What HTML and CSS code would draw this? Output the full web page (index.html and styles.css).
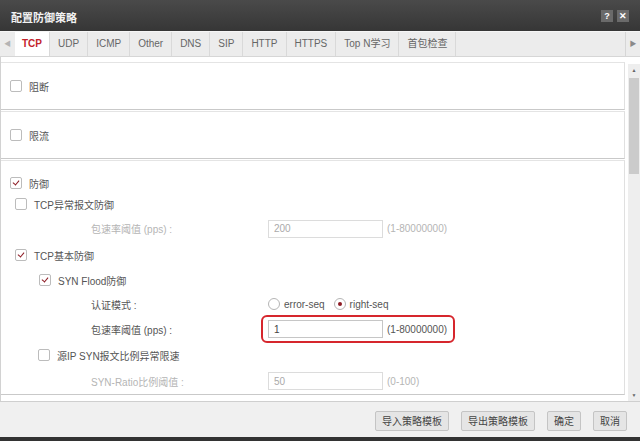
FILE: index.html
```html
<!DOCTYPE html>
<html lang="zh-CN">
<head>
    <meta charset="UTF-8">
    <title>配置防御策略</title>
    <link rel="stylesheet" href="styles.css">
</head>
<body>
<div class="dialog">
    <div class="titlebar">
        <span class="title">配置防御策略</span>
        <div class="title-btns">
            <span class="tbtn">?</span>
            <span class="tbtn">&#x2715;</span>
        </div>
    </div>

    <div class="tabbar">
        <span class="tab-arrow">&#9664;</span>
        <div class="tabs">
            <span class="tab active">TCP</span>
            <span class="tab">UDP</span>
            <span class="tab">ICMP</span>
            <span class="tab">Other</span>
            <span class="tab">DNS</span>
            <span class="tab">SIP</span>
            <span class="tab">HTTP</span>
            <span class="tab">HTTPS</span>
            <span class="tab">Top N学习</span>
            <span class="tab">首包检查</span>
        </div>
        <span class="tab-arrow right">&#9654;</span>
    </div>

    <div class="body">
        <div class="panels">
            <div class="section small">
                <label class="check"><span class="box"></span>阻断</label>
            </div>
            <div class="section small">
                <label class="check"><span class="box"></span>限流</label>
            </div>
            <div class="section big">
                <div class="row h20">
                    <label class="check"><span class="box on"></span>防御</label>
                </div>
                <div class="row h22 lv1">
                    <label class="check"><span class="box"></span>TCP异常报文防御</label>
                </div>
                <div class="row h27">
                    <span class="field-label off">包速率阈值 (pps) :</span>
                    <input class="txt off" type="text" value="200" disabled>
                    <span class="range off">(1-80000000)</span>
                </div>
                <div class="row h26 lv1">
                    <label class="check"><span class="box on"></span>TCP基本防御</label>
                </div>
                <div class="row h24 lv2">
                    <label class="check"><span class="box on"></span>SYN Flood防御</label>
                </div>
                <div class="row h24">
                    <span class="field-label">认证模式 :</span>
                    <label class="radio"><span class="dot"></span>error-seq</label>
                    <label class="radio"><span class="dot on"></span>right-seq</label>
                </div>
                <div class="row h26">
                    <span class="field-label">包速率阈值 (pps) :</span>
                    <div class="mark">
                        <input class="txt" type="text" value="1">
                        <span class="range">(1-80000000)</span>
                    </div>
                </div>
                <div class="row h26 lv2b">
                    <label class="check"><span class="box"></span>源IP SYN报文比例异常限速</label>
                </div>
                <div class="row h26">
                    <span class="field-label off">SYN-Ratio比例阈值 :</span>
                    <input class="txt off" type="text" value="50" disabled>
                    <span class="range off">(0-100)</span>
                </div>
            </div>
        </div>
        <div class="scrollbar">
            <span class="sarrow">&#9650;</span>
            <span class="thumb"></span>
            <span class="sarrow down">&#9660;</span>
        </div>
    </div>

    <div class="footer">
        <button class="btn">导入策略模板</button>
        <button class="btn">导出策略模板</button>
        <button class="btn">确定</button>
        <button class="btn">取消</button>
    </div>
    <div class="bottom"></div>
</div>
</body>
</html>
```

FILE: styles.css
```css
body {
    margin: 0;
    font-family: "Liberation Sans", "Noto Sans CJK SC", sans-serif;
    font-size: 10px;
    color: #444;
    background: #fff;
}
.dialog {
    width: 640px;
    height: 441px;
    display: flex;
    flex-direction: column;
    overflow: hidden;
}

/* 标题栏 */
.titlebar {
    height: 31px;
    flex: none;
    background: linear-gradient(#4a4a4a, #363636);
    display: flex;
    align-items: center;
    justify-content: space-between;
    padding: 0 11px;
}
.title {
    color: #f2f2f2;
    font-size: 11px;
    font-weight: bold;
    margin-top: 2px;
}
.title-btns {
    display: flex;
    gap: 4px;
}
.tbtn {
    width: 12px;
    height: 12px;
    background: #6a6a6a;
    color: #fff;
    font-size: 9px;
    font-weight: bold;
    line-height: 12px;
    text-align: center;
}

/* 标签栏 */
.tabbar {
    height: 26px;
    flex: none;
    background: #ececec;
    border-top: 1px solid #f6f6f6;
    border-bottom: 1px solid #d6d6d6;
    box-sizing: border-box;
    display: flex;
    position: relative;
}
.tab-arrow {
    width: 15px;
    color: #b4b4b4;
    font-size: 7px;
    line-height: 24px;
    text-align: center;
}
.tab-arrow.right {
    margin-left: auto;
    width: 14px;
    color: #8a8a8a;
    border-left: 1px solid #d6d6d6;
}
.tabs {
    display: flex;
}
.tab {
    padding: 0 8px;
    line-height: 24px;
    font-size: 10px;
    color: #666;
    border-right: 1px solid #d9d9d9;
}
.tab.active {
    background: #fff;
    color: #c3232b;
    font-weight: bold;
    padding: 0 7px 0 7px;
    position: relative;
}
.tab.active::after {
    content: "";
    position: absolute;
    left: 12px;
    bottom: -5px;
    border-left: 4px solid transparent;
    border-right: 4px solid transparent;
    border-top: 4px solid #fff;
}

/* 内容区 */
.body {
    flex: 1;
    display: flex;
    min-height: 0;
    border-bottom: 1px solid #cfcfcf;
}
.panels {
    flex: 1;
    padding-top: 5px;
    overflow: hidden;
    border-left: 1px solid #d2d2d2;
    margin-right: 3px;
}
.section {
    border-top: 1px solid #e4e4e4;
    border-bottom: 1px solid #c9c9c9;
    border-right: 1px solid #e0e0e0;
    margin-bottom: 1px;
    box-sizing: border-box;
}
.section.small {
    height: 48px;
    display: flex;
    align-items: center;
    padding-left: 9px;
}
.section.big {
    padding: 12px 0 0 9px;
}
.row {
    display: flex;
    align-items: center;
}
.h20 { height: 20px; }
.h22 { height: 22px; }
.h24 { height: 24px; }
.h26 { height: 26px; }
.h27 { height: 27px; }
.lv1 { padding-left: 5px; }
.lv2 { padding-left: 29px; }
.lv2b { padding-left: 28px; }

.check {
    display: flex;
    align-items: center;
    color: #555;
}
.box {
    width: 10px;
    height: 10px;
    border: 1px solid #bcbcbc;
    border-radius: 2px;
    background: #fff;
    margin-right: 7px;
    position: relative;
}
.box.on::after {
    content: "";
    position: absolute;
    left: 3px;
    top: 1px;
    width: 3px;
    height: 5px;
    border-right: 1.5px solid #8d1b24;
    border-bottom: 1.5px solid #8d1b24;
    transform: rotate(40deg);
}

.field-label {
    width: 177px;
    padding-left: 81px;
    color: #555;
}
.off {
    color: #b5b5b5;
}
.txt {
    width: 115px;
    height: 18px;
    box-sizing: border-box;
    border: 1px solid #c6c6c6;
    padding: 0 5px;
    font-family: inherit;
    font-size: 10px;
    color: #444;
    background: #fff;
    margin: 0;
}
.txt.off {
    color: #aaa;
    border-color: #dcdcdc;
}
.range {
    margin-left: 4px;
    color: #555;
}
.range.off {
    color: #b5b5b5;
}
.mark {
    display: flex;
    align-items: center;
    border: 2px solid #d6262d;
    border-radius: 6px;
    padding: 3px 6px 3px 5px;
    margin-left: -7px;
}

.radio {
    display: flex;
    align-items: center;
    margin-right: 9px;
    color: #555;
}
.dot {
    width: 10px;
    height: 10px;
    border: 1px solid #b5b5b5;
    border-radius: 50%;
    margin-right: 4px;
    position: relative;
}
.dot.on::after {
    content: "";
    position: absolute;
    left: 3px;
    top: 3px;
    width: 4px;
    height: 4px;
    border-radius: 50%;
    background: #8d1b24;
}

/* 滚动条 */
.scrollbar {
    width: 12px;
    margin-top: 7px;
    background: #eeeeee;
    display: flex;
    flex-direction: column;
    align-items: center;
}
.sarrow {
    font-size: 5px;
    color: #666;
    height: 12px;
    line-height: 12px;
}
.sarrow.down {
    margin-top: auto;
}
.thumb {
    width: 10px;
    height: 96px;
    background: #cbcbcb;
    margin-top: 2px;
}

/* 底部按钮 */
.footer {
    height: 35px;
    flex: none;
    background: #f0f0f0;
    display: flex;
    align-items: center;
    justify-content: flex-end;
    gap: 12px;
    padding-right: 13px;
    box-sizing: border-box;
}
.btn {
    height: 20px;
    padding: 0 6px;
    border: 1px solid #c4c4c4;
    border-radius: 2px;
    background: #e5e5e5;
    color: #444;
    font-family: inherit;
    font-size: 10px;
    margin-top: 2px;
}
.bottom {
    height: 4px;
    flex: none;
    background: #333;
}
```
